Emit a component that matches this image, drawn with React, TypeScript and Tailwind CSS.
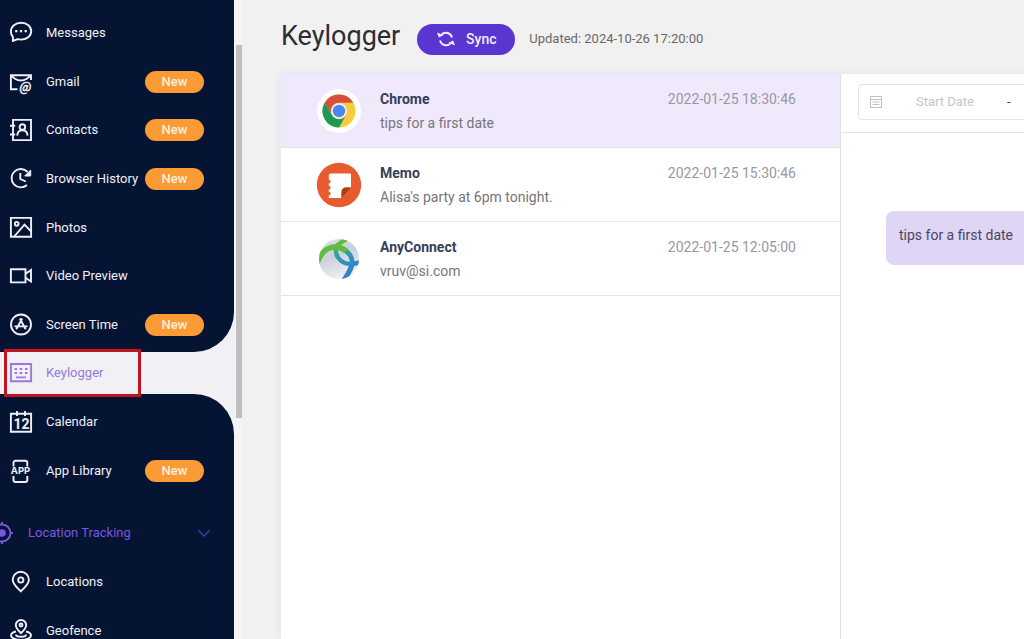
import type { ReactNode } from 'react';

interface MenuItem {
  label: string;
  icon: ReactNode;
  isNew?: boolean;
}

interface LogEntry {
  app: string;
  text: string;
  time: string;
  icon: ReactNode;
}

function Icon({ children }: { children: ReactNode }) {
  return (
    <svg
      viewBox="0 0 22 22"
      className="size-[22px] shrink-0 overflow-visible"
      fill="none"
      stroke="currentColor"
      strokeWidth="1.9"
      aria-hidden="true"
    >
      {children}
    </svg>
  );
}

const topItems: MenuItem[] = [
  {
    label: 'Messages',
    icon: (
      <Icon>
        <path d="M3 15.200C1.600 13.500.9 11.700.9 9.500.9 4.500 5.400.7 11.200.7S21.200 4.500 21.200 9.300 16.700 17.600 11 17.600c-1.200 0-2.300-.1-3.400-.4L2.800 19z" strokeLinejoin="round" />
        <path d="M5.200 9.200h2.200M9.900 9.200h2.200M14.600 9.200h2.200" strokeWidth="2.300" />
      </Icon>
    ),
  },
  {
    label: 'Gmail',
    isNew: true,
    icon: (
      <Icon>
        <path d="M7.500 18.200H.9V4.200H21V9" />
        <path d="M1 4.500l4 3.200c3.400 2.200 8.200 2.200 11.800 0L21 4.500" />
        <text x="9.500" y="19.500" fontSize="13.500" fontFamily="Roboto, sans-serif" fontStyle="italic" fill="currentColor" strokeWidth="0.5">@</text>
      </Icon>
    ),
  },
  {
    label: 'Contacts',
    isNew: true,
    icon: (
      <Icon>
        <path d="M3 .9h18v20.200H3z" />
        <path d="M0 6.800h5.200M0 15.500h5.200" />
        <circle cx="12.400" cy="8" r="2.800" />
        <path d="M7.200 16.600c.3-3.500 2.200-5.300 5.200-5.300s4.900 1.800 5.200 5.300" />
      </Icon>
    ),
  },
  {
    label: 'Browser History',
    isNew: true,
    icon: (
      <Icon>
        <path d="M17.600 4A9.200 9.200 0 1 0 17 17" />
        <path d="M10.300 5v6l5.500 2.500" />
        <path d="M20.700 2v6h-6z" fill="currentColor" strokeWidth="1" />
      </Icon>
    ),
  },
  {
    label: 'Photos',
    icon: (
      <Icon>
        <path d="M.9.9h20.200v18.800H.9z" />
        <circle cx="6.700" cy="6.800" r="1.900" />
        <path d="M4.200 19.500L14.500 7.700l6.500 6.700" />
      </Icon>
    ),
  },
  {
    label: 'Video Preview',
    icon: (
      <Icon>
        <path d="M.9 4.200h14.600v13.200H.9z" />
        <path d="M15.500 8.800L21 5.100v11.400l-5.500-3.700" />
      </Icon>
    ),
  },
  {
    label: 'Screen Time',
    isNew: true,
    icon: (
      <Icon>
        <circle cx="11" cy="10.500" r="10" />
        <path d="M12.200 4.500L6.300 15.300M9.800 4.500l5.900 10.800M4.500 12.400h13" />
      </Icon>
    ),
  },
];

const bottomItems: MenuItem[] = [
  {
    label: 'Calendar',
    icon: (
      <Icon>
        <path d="M.9 2.700h20.200v18H.9zM7 0v5M15 0v5" />
        <text x="11.500" y="17.700" fontSize="14" fontWeight="700" textAnchor="middle" fontFamily="Roboto, sans-serif" fill="currentColor" stroke="none">12</text>
      </Icon>
    ),
  },
  {
    label: 'App Library',
    isNew: true,
    icon: (
      <Icon>
        <path d="M3.500 6.500V2.800c0-1.200.8-2 2-2h9.800c1.200 0 2 .8 2 2v3.700M3.500 16v4c0 1.200.8 2 2 2h9.800c1.200 0 2-.8 2-2v-4" />
        <text x="10.500" y="14.400" fontSize="9.500" fontWeight="700" textAnchor="middle" fontFamily="Inter, sans-serif" fill="currentColor" stroke="none">APP</text>
      </Icon>
    ),
  },
];

const locationItems: MenuItem[] = [
  {
    label: 'Locations',
    icon: (
      <Icon>
        <path d="M10.800 20.300C7 16.600 2.700 12.800 2.700 8.900a8.100 8.100 0 0 1 16.200 0c0 3.900-4.300 7.700-8.100 11.400z" />
        <circle cx="10.800" cy="9" r="2.600" />
      </Icon>
    ),
  },
  {
    label: 'Geofence',
    icon: (
      <Icon>
        <path d="M11 13.200C8.500 10.500 5.800 8 5.800 5.200a5.200 5.200 0 0 1 10.400 0c0 2.800-2.700 5.300-5.200 8z" />
        <circle cx="11" cy="5" r="1.500" />
        <path d="M6 11.500c-3 .8-5 2-5 3.900 0 2.600 4.500 4.500 10 4.500s10-1.900 10-4.500c0-1.900-2-3.100-5-3.900" />
        <path d="M6 14.500c0 1.400 2.300 2.300 5 2.300s5-.9 5-2.300" />
      </Icon>
    ),
  },
];

const ChromeIcon = (
  <svg viewBox="0 0 46 46" className="size-[46px] shrink-0" aria-hidden="true">
    <circle cx="23" cy="23" r="22" fill="#fff" />
    <circle cx="23" cy="23" r="16.500" fill="#fbca3e" />
    <path d="M8.710 14.750A16.500 16.500 0 0 1 37.290 14.750H23A8.250 8.250 0 0 0 15.860 27.120z" fill="#d94f3d" />
    <path d="M8.710 14.750A16.500 16.500 0 0 0 23 39.500L30.140 27.120A8.250 8.250 0 0 1 15.860 27.120z" fill="#1a9a58" />
    <circle cx="23" cy="23" r="7.800" fill="#f2f3f7" />
    <circle cx="23" cy="23" r="6.200" fill="#4a88ee" />
  </svg>
);

const MemoIcon = (
  <svg viewBox="0 0 46 46" className="size-[46px] shrink-0" aria-hidden="true">
    <circle cx="23" cy="23" r="22.200" fill="#e65c2e" />
    <path d="M14 11.500h19.500c1 0 1.500.5 1.500 1.500v12.500h-5c-2.500 0-4.500 2-4.500 4.500v6H14c-.8 0-1.200-.4-1.200-1v-1.500a1.900 1.900 0 0 0 0-3.800v-2.200a1.900 1.900 0 0 0 0-3.800v-2.200a1.900 1.900 0 0 0 0-3.800v-5c0-.5.400-.7 1.200-.7z" fill="#fff" />
    <path d="M35 25.500L25.500 36v-6c0-2.500 2-4.500 4.500-4.500z" fill="#a8400f" />
  </svg>
);

const AnyConnectIcon = (
  <svg viewBox="0 0 46 46" className="size-[46px] shrink-0" aria-hidden="true">
    <defs>
      <clipPath id="globe">
        <circle cx="23" cy="23" r="20" />
      </clipPath>
      <linearGradient id="globeShade" x1="0" y1="0" x2="0.4" y2="1">
        <stop offset="0" stopColor="#e2e4e8" />
        <stop offset="0.5" stopColor="#ccd0dd" />
        <stop offset="1" stopColor="#f0f1f5" />
      </linearGradient>
      <linearGradient id="blueBand" gradientUnits="userSpaceOnUse" x1="18" y1="10" x2="38" y2="36">
        <stop offset="0" stopColor="#4bb56c" />
        <stop offset="0.4" stopColor="#2f9cac" />
        <stop offset="1" stopColor="#2f80d2" />
      </linearGradient>
    </defs>
    <g clipPath="url(#globe)">
      <path d="M0 0h46v46H0z" fill="url(#globeShade)" />
      <path d="M20 12c-1 8 4 13 9 15s10 1 16-1" fill="none" stroke="url(#blueBand)" strokeWidth="4.500" />
      <path d="M24 12c8 3 13 9 12 16-1 6-4 10-8 16" fill="none" stroke="url(#blueBand)" strokeWidth="5" />
      <path d="M1 27C5 16 12 11 19 11c5 0 8 1 11 4" fill="none" stroke="#5fbd3f" strokeWidth="5.500" />
      <path d="M19 12c3-4 6-6 12-9" fill="none" stroke="#5fbd3f" strokeWidth="4.500" />
    </g>
  </svg>
);

const entries: LogEntry[] = [
  { app: 'Chrome', text: 'tips for a first date', time: '2022-01-25 18:30:46', icon: ChromeIcon },
  { app: 'Memo', text: "Alisa's party at 6pm tonight.", time: '2022-01-25 15:30:46', icon: MemoIcon },
  { app: 'AnyConnect', text: 'vruv@si.com', time: '2022-01-25 12:05:00', icon: AnyConnectIcon },
];

function MenuLink({ item }: { item: MenuItem }) {
  return (
    <a href="#" className="flex min-h-12 items-center gap-[14px] pr-[30px] pl-[10px] text-[#eef0f8]">
      {item.icon}
      <span className="flex-1 whitespace-nowrap">{item.label}</span>
      {item.isNew && (
        <span className="-ml-3 h-[22px] w-[59px] shrink-0 rounded-full bg-[#fb9b35] text-center leading-[21px] font-medium text-[#fff0dc]">
          New
        </span>
      )}
    </a>
  );
}

function Sidebar() {
  return (
    <nav className="flex w-[234px] shrink-0 flex-col overflow-hidden bg-[#f0f0f5] text-[13px] leading-5">
      <div className="grid h-[352px] shrink-0 auto-rows-fr grid-cols-1 rounded-br-[40px] bg-[#061433] pt-[9px] pb-[3px]">
        {topItems.map((item) => (
          <MenuLink key={item.label} item={item} />
        ))}
      </div>

      {/* Active entry */}
      <a
        href="#"
        aria-current="page"
        className="relative flex h-[42px] shrink-0 items-center gap-[14px] pl-[10px] text-[#9a78dc]"
      >
        <Icon>
          <path d="M.9 2h20.200v17.200H.9z" />
          <path d="M4.500 7h2.500M9.700 7h2.500M15 7h2.500M4.500 11h2.500M9.700 11h2.500M15 11h2.500M6 15.400h10" />
        </Icon>
        Keylogger
        <span className="pointer-events-none absolute -top-[3px] -bottom-[3px] left-1 w-[137px] border-3 border-[#c2151f]" />
      </a>

      <div className="flex-1 rounded-tr-[40px] bg-[#061433] pt-[3px]">
        <div className="grid auto-rows-[49px] grid-cols-1">
          {bottomItems.map((item) => (
            <MenuLink key={item.label} item={item} />
          ))}
        </div>
        <button type="button" className="mt-[14px] flex h-12 w-full items-center gap-[14px] pr-[23px] text-[#7857e0]">
          <span className="-ml-2">
            <Icon>
              <circle cx="10" cy="11" r="8.500" />
              <path d="M10 0v3M10 19v3M18 11h3M-1 11h3" />
              <circle cx="10" cy="11" r="3.800" fill="currentColor" stroke="none" />
            </Icon>
          </span>
          <span className="flex-1 text-left">Location Tracking</span>
          <svg viewBox="0 0 14 14" className="size-[14px]" fill="none" stroke="#3f379b" strokeWidth="1.500" aria-hidden="true">
            <path d="M1 4l6 6 6-6" />
          </svg>
        </button>
        <div className="grid auto-rows-[49px] grid-cols-1">
          {locationItems.map((item) => (
            <MenuLink key={item.label} item={item} />
          ))}
        </div>
      </div>
    </nav>
  );
}

function EntryList() {
  return (
    <ul className="w-[560px] shrink-0 border-r border-[#e2e2e6]">
      {entries.map((entry, index) => (
        <li key={entry.app} className={index === 0 ? 'bg-[#f0e9fb]' : 'bg-white'}>
          <button
            type="button"
            className="flex h-[74px] w-full items-center gap-[18px] border-b border-[#e4e4e8] pr-11 pl-[35px] text-left leading-6"
          >
            {entry.icon}
            <span className="flex flex-1 flex-col">
              <span className="flex justify-between">
                <span className="text-[14px] font-bold text-[#34405a]">{entry.app}</span>
                <span className="text-[14px] text-[#9a96a5]">{entry.time}</span>
              </span>
              <span className="text-[14px] text-[#77747c]">{entry.text}</span>
            </span>
          </button>
        </li>
      ))}
    </ul>
  );
}

function Conversation() {
  return (
    <section className="min-w-[420px] flex-1">
      <div className="border-b border-[#e4e4e8] px-[17px] pt-[10px] pb-3">
        <div className="flex h-9 items-center rounded-[4px] border border-[#e3e4ea] pl-[10px] text-[13px]">
          <svg viewBox="0 0 14 14" className="size-[14px] shrink-0" fill="none" stroke="#c0c2c8" aria-hidden="true">
            <path d="M1.500 1.500h11v11h-11zM1.500 4.500h11M3.500 7h7M3.500 9.500h7" />
          </svg>
          <input
            type="text"
            aria-label="Start Date"
            placeholder="Start Date"
            className="ml-[10px] w-[104px] min-w-0 text-center outline-none placeholder:text-[#c3c5cc]"
          />
          <span className="ml-[10px] text-[#444]">-</span>
          <input
            type="text"
            aria-label="End Date"
            placeholder="End Date"
            className="ml-5 w-[104px] min-w-0 text-center outline-none placeholder:text-[#c3c5cc]"
          />
        </div>
      </div>
      <p className="mt-[78px] ml-[45px] h-[54px] w-[160px] rounded-lg bg-[#dfd6f5] px-[13px] pt-3 text-[14px] leading-6 text-[#4c4560]">
        tips for a first date
      </p>
    </section>
  );
}

export default function App() {
  return (
    <div className="flex h-screen overflow-hidden bg-[#f1f1f1] font-[Roboto,sans-serif]">
      <Sidebar />
      {/* Scrollbar of the menu */}
      <div className="w-2 shrink-0 bg-[#f4f4f5] pt-[45px] pl-[2px]">
        <div className="h-[373px] w-[6px] bg-[#bfbfc1]" />
      </div>

      <main className="flex min-w-0 flex-1 flex-col overflow-hidden pl-[39px]">
        <header className="flex h-[74px] shrink-0 items-center">
          <h1 className="-mt-[2px] text-[27px] leading-9 text-[#2c2d33]">Keylogger</h1>
          <button
            type="button"
            className="mt-1 ml-[17px] flex h-[31px] w-[98px] shrink-0 items-center justify-center gap-[10px] rounded-full bg-[#5a35cf] text-[14px] font-medium text-[#f0ebff]"
          >
            <svg viewBox="0 0 20 20" className="size-5" fill="none" stroke="currentColor" strokeWidth="1.900" aria-hidden="true">
              <path d="M5.500 5.500A6.300 6.300 0 0 1 16 8.500M14.500 14.500A6.300 6.300 0 0 1 4 11.500" />
              <path d="M1 3.500l1.800 5 4.700-2.300zM19 16.500l-1.800-5-4.700 2.300z" fill="currentColor" stroke="none" />
            </svg>
            Sync
          </button>
          <span className="mt-1 ml-[14px] text-[13px] whitespace-nowrap text-[#68686c]">
            Updated: 2024-10-26 17:20:00
          </span>
        </header>
        <div className="flex flex-1 bg-white shadow-[0_0_8px_rgba(90,60,60,0.08)]">
          <EntryList />
          <Conversation />
        </div>
      </main>
    </div>
  );
}
